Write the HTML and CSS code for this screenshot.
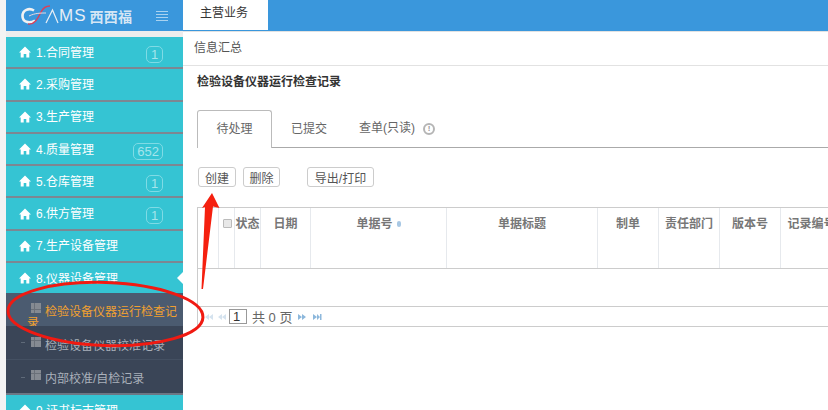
FILE: index.html
```html
<!DOCTYPE html>
<html lang="zh-CN">
<head>
    <meta charset="UTF-8">
    <title>检验设备仪器运行检查记录</title>
    <link rel="stylesheet" href="styles.css">
</head>
<body>
    <div class="page">
        <div class="side">
            <div class="logo">
                <svg class="logo-mark" width="38" height="28" viewBox="0 0 38 28">
                    <path d="M13 8.500 C8 5.500 1.500 8 1.500 14 C1.500 20 8 22 14 18.500" fill="none" stroke="#f2f2f2" stroke-width="2.600"/>
                    <path d="M7 22 C14 23 17 16 20 10 C22 6 25 4 29 4" fill="none" stroke="#d9415a" stroke-width="1.400"/>
                    <path d="M8 14 C14 11 20 11 25 11" fill="none" stroke="#e8d8e0" stroke-width="1"/>
                    <path d="M25 21 L31.500 8 L37 21" fill="none" stroke="#e8eef5" stroke-width="1.200"/>
                </svg>
                <span class="logo-text">MS</span>
                <span class="logo-cn">西西福</span>
                <span class="burger"><i></i><i></i><i></i><i></i></span>
            </div>
            <div class="side-gap"></div>
            <div class="menu-item">
                <svg class="home" viewBox="0 0 12 12"><path d="M6 0.5 L12 6.5 L10.3 6.5 L10.3 11.5 L7.3 11.5 L7.3 8 L4.7 8 L4.7 11.5 L1.7 11.5 L1.7 6.5 L0 6.5 Z"/></svg>
                <span>1.合同管理</span><b class="badge">1</b>
            </div>
            <div class="menu-item">
                <svg class="home" viewBox="0 0 12 12"><path d="M6 0.5 L12 6.5 L10.3 6.5 L10.3 11.5 L7.3 11.5 L7.3 8 L4.7 8 L4.7 11.5 L1.7 11.5 L1.7 6.5 L0 6.5 Z"/></svg>
                <span>2.采购管理</span>
            </div>
            <div class="menu-item">
                <svg class="home" viewBox="0 0 12 12"><path d="M6 0.5 L12 6.5 L10.3 6.5 L10.3 11.5 L7.3 11.5 L7.3 8 L4.7 8 L4.7 11.5 L1.7 11.5 L1.7 6.5 L0 6.5 Z"/></svg>
                <span>3.生产管理</span>
            </div>
            <div class="menu-item">
                <svg class="home" viewBox="0 0 12 12"><path d="M6 0.5 L12 6.5 L10.3 6.5 L10.3 11.5 L7.3 11.5 L7.3 8 L4.7 8 L4.7 11.5 L1.7 11.5 L1.7 6.5 L0 6.5 Z"/></svg>
                <span>4.质量管理</span><b class="badge">652</b>
            </div>
            <div class="menu-item">
                <svg class="home" viewBox="0 0 12 12"><path d="M6 0.5 L12 6.5 L10.3 6.5 L10.3 11.5 L7.3 11.5 L7.3 8 L4.7 8 L4.7 11.5 L1.7 11.5 L1.7 6.5 L0 6.5 Z"/></svg>
                <span>5.仓库管理</span><b class="badge">1</b>
            </div>
            <div class="menu-item">
                <svg class="home" viewBox="0 0 12 12"><path d="M6 0.5 L12 6.5 L10.3 6.5 L10.3 11.5 L7.3 11.5 L7.3 8 L4.7 8 L4.7 11.5 L1.7 11.5 L1.7 6.5 L0 6.5 Z"/></svg>
                <span>6.供方管理</span><b class="badge">1</b>
            </div>
            <div class="menu-item">
                <svg class="home" viewBox="0 0 12 12"><path d="M6 0.5 L12 6.5 L10.3 6.5 L10.3 11.5 L7.3 11.5 L7.3 8 L4.7 8 L4.7 11.5 L1.7 11.5 L1.7 6.5 L0 6.5 Z"/></svg>
                <span>7.生产设备管理</span>
            </div>
            <div class="menu-item open">
                <svg class="home" viewBox="0 0 12 12"><path d="M6 0.5 L12 6.5 L10.3 6.5 L10.3 11.5 L7.3 11.5 L7.3 8 L4.7 8 L4.7 11.5 L1.7 11.5 L1.7 6.5 L0 6.5 Z"/></svg>
                <span>8.仪器设备管理</span>
            </div>
            <div class="sub-item active"><i class="grid"></i>检验设备仪器运行检查记录</div>
            <div class="sub-item"><i class="dash"></i><i class="grid"></i>检验设备仪器校准记录</div>
            <div class="sub-item last"><i class="dash"></i><i class="grid"></i>内部校准/自检记录</div>
            <div class="menu-item">
                <svg class="home" viewBox="0 0 12 12"><path d="M6 0.5 L12 6.5 L10.3 6.5 L10.3 11.5 L7.3 11.5 L7.3 8 L4.7 8 L4.7 11.5 L1.7 11.5 L1.7 6.5 L0 6.5 Z"/></svg>
                <span>9.证书标志管理</span>
            </div>
        </div>

        <div class="main">
            <div class="topbar">
                <div class="top-tab">主营业务</div>
            </div>
            <div class="crumb">信息汇总</div>
            <div class="content">
                <h1 class="title">检验设备仪器运行检查记录</h1>
                <div class="tabs">
                    <div class="tab current">待处理</div>
                    <div class="tab second">已提交</div>
                    <div class="tab third">查单(只读)</div>
                    <span class="info">!</span>
                </div>
                <div class="tools">
                    <button type="button" class="btn">创建</button>
                    <button type="button" class="btn del">删除</button>
                    <button type="button" class="btn out">导出/打印</button>
                </div>
                <div class="table">
                    <div class="thead">
                        <div class="th"></div>
                        <div class="th"><i class="check"></i></div>
                        <div class="th">状态</div>
                        <div class="th">日期</div>
                        <div class="th">单据号<i class="sort"></i></div>
                        <div class="th">单据标题</div>
                        <div class="th">制单</div>
                        <div class="th">责任部门</div>
                        <div class="th">版本号</div>
                        <div class="th">记录编号</div>
                    </div>
                    <div class="tbody"></div>
                    <div class="pager">
                        <svg class="pg-first" width="28" height="8" viewBox="0 0 28 8">
                            <path d="M4 4 L8 1 L8 7 Z M8 4 L12 1 L12 7 Z M17 4 L21 1 L21 7 Z M21 4 L25 1 L25 7 Z" fill="#d5e3ef"/>
                        </svg>
                        <span class="pg-input">1</span>
                        <span class="pg-text">共 0 页</span>
                        <svg class="pg-last" width="26" height="8" viewBox="0 0 26 8">
                            <path d="M0 1 L4 4 L0 7 Z M4 1 L8 4 L4 7 Z M15 1 L19 4 L15 7 Z M19 1 L22 4 L19 7 Z M22 1 H23.5 V7 H22 Z" fill="#8db8dc"/>
                        </svg>
                    </div>
                </div>
            </div>
        </div>

        <!-- red marks drawn over the screenshot -->
        <svg class="marks" width="828" height="410" viewBox="0 0 828 410">
            <ellipse cx="105.500" cy="314" rx="97.500" ry="31.500" transform="rotate(2 105.500 314)" fill="none" stroke="#f01a12" stroke-width="3"/>
            <path d="M212 193 L219.500 208 L213 206.500 L203 289 L201.500 289 L205 207 L202 208 Z" fill="#f5200f"/>
        </svg>
    </div>
</body>
</html>
```

FILE: styles.css
```css
* {
    margin: 0;
    padding: 0;
    box-sizing: border-box;
}

body {
    font-family: "Liberation Sans", "Noto Sans CJK SC", sans-serif;
    font-size: 12px;
    background: #fff;
}

.page {
    position: relative;
    display: flex;
    width: 828px;
    height: 410px;
    overflow: hidden;
}

.side {
    flex: none;
    width: 183px;
    padding-left: 6px;
    background: linear-gradient(#f3f3f3, #f3f3f3) left / 6px 100% no-repeat;
}

.logo {
    display: flex;
    align-items: center;
    height: 31px;
    padding-left: 15px;
    background: #3a97dc;
    color: #e6edf5;
}

.logo-mark {
    flex: none;
}

.logo-text {
    font-size: 17px;
    letter-spacing: 1px;
}

.logo-cn {
    margin-left: 3px;
    font-size: 14px;
    font-weight: bold;
    letter-spacing: 0.3px;
    color: #d5e6f5;
}

.burger {
    display: flex;
    flex-direction: column;
    gap: 2px;
    width: 12px;
    margin-left: 24px;
}

.burger i {
    display: block;
    height: 1px;
    background: #a9d2f0;
}

.side-gap {
    height: 6px;
    background: #ededed;
}

.menu-item {
    position: relative;
    display: flex;
    align-items: center;
    height: 32.300px;
    padding: 0 0 2px 13px;
    border-bottom: 2px solid #7d8792;
    background: #35c4d3;
    color: #fff;
    font-size: 12px;
}

.menu-item.open {
    height: 30px;
    border-bottom: none;
}

.menu-item.open::after {
    content: "";
    position: absolute;
    right: 0;
    top: 9px;
    border: 6px solid transparent;
    border-right-color: #fff;
    border-left: none;
}

.home {
    flex: none;
    width: 12px;
    height: 12px;
    margin: 2px 5px 0 0;
    fill: #fff;
}

.badge {
    position: absolute;
    right: 20px;
    top: 9px;
    height: 17px;
    min-width: 17px;
    padding: 0 3px;
    border: 1px solid #7fdbe5;
    border-radius: 5px;
    color: #a5e5ec;
    font-weight: normal;
    font-size: 13px;
    line-height: 15px;
    text-align: center;
}

.sub-item {
    position: relative;
    height: 34px;
    padding: 11px 4px 0 25px;
    border-bottom: 1px solid #445062;
    background: #3a4557;
    color: #a9b0ba;
    line-height: 14px;
    word-break: break-all;
}

.sub-item.active {
    height: 33px;
    padding: 10px 4px 0 21px;
    line-height: 11px;
    background: #4b5b70;
    border-bottom: none;
    color: #f0a030;
}

.sub-item.last {
    height: 35px;
    padding-top: 10px;
    border-bottom: 2px solid #6c7785;
}

.grid {
    display: inline-block;
    width: 10px;
    height: 10px;
    margin: 0 4px 0 0;
    vertical-align: 3px;
    background:
        repeating-linear-gradient(90deg, transparent 0 3px, #6a7079 3px 3.500px),
        repeating-linear-gradient(0deg, transparent 0 3px, #6a7079 3px 3.500px),
        #858a92;
}

.sub-item.active .grid {
    margin-left: 4px;
}

.dash {
    position: absolute;
    left: 15px;
    top: 16px;
    width: 4px;
    height: 1px;
    background: #5f6a79;
}

.sub-item.last .dash {
    top: 17px;
}

.main {
    flex: 1;
    min-width: 0;
}

.topbar {
    display: flex;
    height: 32px;
    padding-bottom: 1px;
    border-bottom: 1px solid #e2e2e2;
    background: linear-gradient(#3a97dc, #3a97dc) top / 100% 31px no-repeat;
}

.top-tab {
    width: 85px;
    background: #fff;
    color: #333;
    line-height: 27px;
    padding-left: 17px;
}

.crumb {
    height: 34px;
    padding-left: 11px;
    border-bottom: 1px solid #e2e2e2;
    color: #555;
    line-height: 32px;
}

.content {
    padding: 0 0 0 14px;
}

.title {
    margin-top: 8px;
    font-size: 12px;
    font-weight: bold;
    color: #333;
    line-height: 17px;
}

.tabs {
    display: flex;
    align-items: center;
    height: 38px;
    margin-top: 19px;
    border-bottom: 1px solid #aaa;
    color: #666;
}

.tab {
    line-height: 34px;
}

.tab.current {
    align-self: stretch;
    width: 75px;
    height: 38px;
    border: 1px solid #bbb;
    border-bottom: none;
    border-radius: 3px 3px 0 0;
    background: #fff;
    line-height: 36px;
    text-align: center;
}

.tab.second {
    margin-left: 19px;
}

.tab.third {
    margin-left: 32px;
    line-height: 37px;
}

.info {
    width: 12px;
    height: 12px;
    margin-left: 8px;
    border: 2px solid #b5b5b5;
    border-radius: 50%;
    color: #999;
    font-size: 8px;
    font-weight: bold;
    line-height: 8px;
    text-align: center;
}

.tools {
    display: flex;
    margin: 19px 0 0 1px;
}

.btn {
    height: 20px;
    width: 38px;
    margin-right: 7px;
    border: 1px solid #ccc;
    border-radius: 3px;
    background: #fff;
    color: #555;
    font-family: inherit;
    font-size: 12px;
}

.btn.del {
    width: 37px;
    margin-right: 27px;
}

.btn.out {
    width: 67px;
}

.table {
    margin-top: 20px;
    border-left: 1px solid #ccc;
    overflow: hidden;
}

.thead {
    display: grid;
    grid-template-columns: 21px 16px 26px 50px 136px 151px 61px 61px 61px 61px;
    height: 62px;
    border-top: 1px solid #ccc;
    border-bottom: 1px solid #ccc;
}

.th {
    border-right: 1px solid #e6e9ed;
    color: #777;
    font-weight: bold;
    line-height: 32px;
    text-align: center;
    white-space: nowrap;
}

.th:last-child {
    border-right: none;
}

.check {
    display: inline-block;
    width: 9px;
    height: 9px;
    margin-left: 1px;
    border: 1px solid #bbb;
    border-radius: 1px;
    background: #e8e8e8;
    vertical-align: 0.500px;
}

.sort {
    display: inline-block;
    width: 4px;
    height: 6px;
    margin-left: 4px;
    border-radius: 2px;
    background: #a8c8e4;
    vertical-align: 1px;
}

.tbody {
    height: 37px;
}

.pager {
    display: flex;
    align-items: center;
    height: 21px;
    border-top: 1px solid #ccc;
    border-bottom: 1px solid #ccc;
    color: #666;
    font-size: 13px;
}

.pg-first {
    margin-left: 3px;
}

.pg-input {
    width: 18px;
    height: 15px;
    padding-left: 3px;
    border: 1px solid #999;
    color: #333;
    line-height: 13px;
}

.pg-text {
    margin-left: 5px;
}

.pg-last {
    margin-left: 6px;
}

.marks {
    position: absolute;
    left: 0;
    top: 0;
    pointer-events: none;
}
```
